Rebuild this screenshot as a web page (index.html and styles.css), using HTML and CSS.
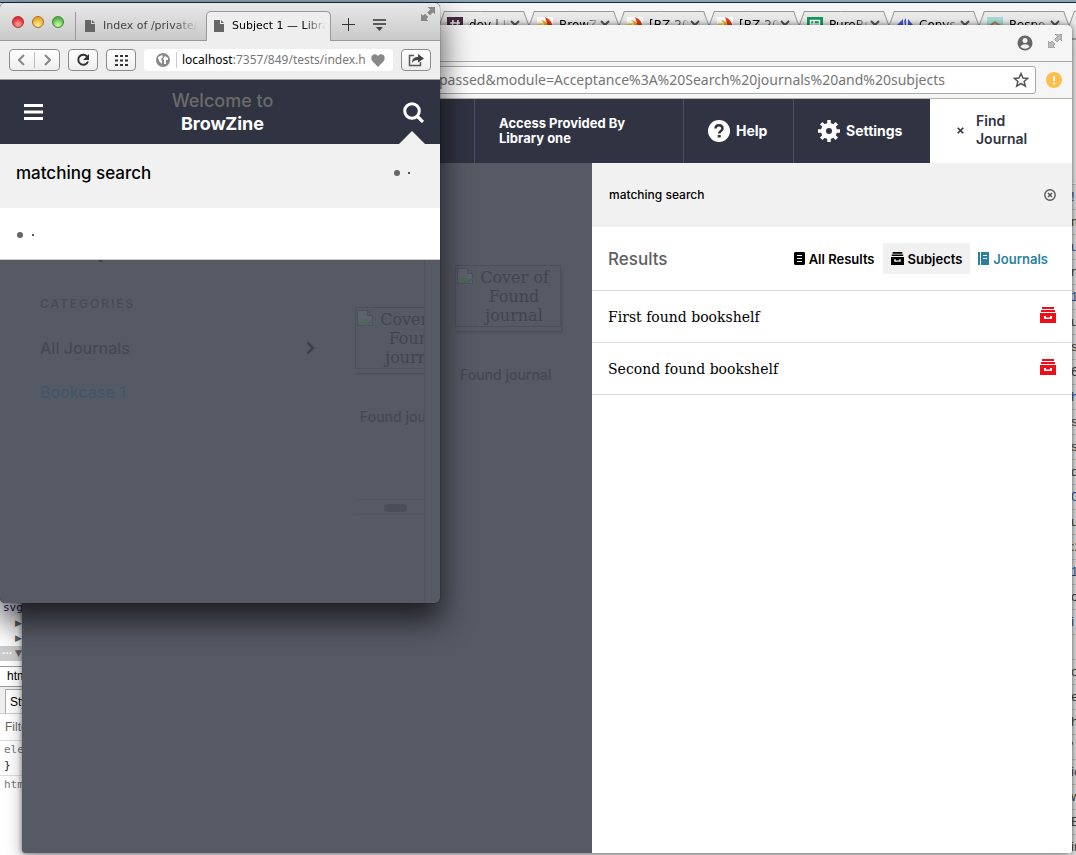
FILE: index.html
```html
<!DOCTYPE html>
<html lang="en">
<head>
<meta charset="utf-8">
<title>BrowZine</title>
<link rel="stylesheet" href="styles.css">
</head>
<body>
<svg class="defs" aria-hidden="true">
  <symbol id="shelf" viewBox="0 0 16 16"><path d="M2 0h12v2H2zM1 3h14v2H1zM0 6h16v10H0zM4 9v3h8V9h-2v1.500H6V9z" fill="currentColor" fill-rule="evenodd"/></symbol>
  <symbol id="expand" viewBox="0 0 14 14"><path d="M7 0h7v7l-2-2-3 3-2.500-2.500 3-3zM7 14H0V7l2 2 2-2 3 3-2 2z" fill="currentColor" stroke="#888" stroke-width=".6"/></symbol>
  <symbol id="page" viewBox="0 0 10 12"><path d="M0 0h6v4h4v8H0zM7 0l3 3H7z" fill="currentColor"/></symbol>
  <symbol id="broken" viewBox="0 0 16 16"><path d="M.5.500h10l5 5v10H.5zM10.500.500v5h5" fill="#5d626d" stroke="#4c505b"/><path d="M1 15l5-6 4 1 2 2-3 3z" fill="#4f6658"/><path d="M9 16l7-6" stroke="#565a65" stroke-width="2"/></symbol>
  <symbol id="flame" viewBox="0 0 16 16"><path d="M0 0h16v16H0z" fill="#fff"/><path d="M8 0c9 4 9 12 3 16H5c5-5 6-9 3-16z" fill="#e33b13"/><path d="M4 3c4 3 4 8-1 13h5c5-6 3-12-4-13z" fill="#ffb21c"/><path d="M0 7l6-1-4 8z" fill="#ffe21c"/></symbol>
  <symbol id="close" viewBox="0 0 10 10"><path d="M1 1l8 8M9 1L1 9" stroke="#555" stroke-width="2"/></symbol>
</svg>
<div class="desktop">
  <section class="window back" aria-label="Browser with developer tools">
    <nav class="backtabs">
      <button class="btab"><svg class="fav" viewBox="0 0 16 16"><path d="M0 0h16v16H0z" fill="#4a2c42"/><path d="M6 3L5 13M11 3l-1 10M3 6h10M3 10h10" stroke="#fff" stroke-width="1.500"/></svg><span>dev | JIRA</span><svg class="x"><use href="#close"/></svg></button>
      <button class="btab"><svg class="fav"><use href="#flame"/></svg><span>BrowZine</span><svg class="x"><use href="#close"/></svg></button>
      <button class="btab"><svg class="fav"><use href="#flame"/></svg><span>[BZ-200]</span><svg class="x"><use href="#close"/></svg></button>
      <button class="btab"><svg class="fav"><use href="#flame"/></svg><span>[BZ-200]</span><svg class="x"><use href="#close"/></svg></button>
      <button class="btab"><svg class="fav" viewBox="0 0 16 16"><path d="M0 0h16v16H0z" fill="#0c9d58"/><path d="M3.500 3.500h9v9h-9zM3 7h10M7 3v10" fill="none" stroke="#fff" stroke-width="1.500"/></svg><span>PureBr</span><svg class="x"><use href="#close"/></svg></button>
      <button class="btab"><svg class="fav" viewBox="0 0 16 16"><path d="M0 8l6-6v12zM7 4l2-3v11zM11 2l5 6-5 5z" fill="#4457d6"/></svg><span>Convs</span><svg class="x"><use href="#close"/></svg></button>
      <button class="btab"><svg class="fav" viewBox="0 0 16 16"><path d="M0 0h16v16H0z" fill="#a5dcd8"/><path d="M3 9l5-4 5 4" fill="none" stroke="#b5835a" stroke-width="2"/></svg><span>Respo</span><svg class="x"><use href="#close"/></svg></button>
      <button class="btab"></button>
    </nav>
    <div class="backbody">
      <div class="devtools">
        <div class="tree">
          <code class="tag">svg</code>
          <span class="arrow">▶</span>
          <span class="arrow">▶</span>
          <span class="arrow selected"><i>···</i>▼</span>
        </div>
        <div class="crumb">html</div>
        <div class="styletabs"><button>Styles</button></div>
        <div class="filter">Filter</div>
        <code class="rule">element<br><b>}</b></code>
        <code class="rule last">html</code>
      </div>
      <div class="console">
        <p class="blue">!</p><p>m</p><p class="blue">u</p><p>na</p><p class="blue">1</p><p>u</p><p>s</p><p>6</p><p class="blue">h</p><p>st</p><p>st</p><p>d</p><p class="blue">0</p><p>u</p><p>:2</p><p class="blue">1'</p><p>c</p><p class="blue">i</p><p></p><p>on</p><p>en</p><p>h</p><p>'</p><p>ic</p><p>w</p><p>E</p><p>in</p>
      </div>
    </div>
  </section>

  <section class="window wide" aria-label="Journal search">
    <div class="titlebar">
      <svg width="16" height="16" viewBox="0 0 16 16"><circle cx="8" cy="8" r="7.500" fill="#666"/><circle cx="8" cy="5.500" r="2.500" fill="#f5f5f5"/><path d="M3.500 11.500c2-3 7-3 9 0-2 3-7 3-9 0z" fill="#f5f5f5"/></svg>
      <svg class="grow" width="14" height="14"><use href="#expand"/></svg>
    </div>
    <div class="urlbar">
      <div class="urlfield">
        <input type="text" aria-label="Address" value="passed&amp;module=Acceptance%3A%20Search%20journals%20and%20subjects">
        <svg width="16" height="16" viewBox="0 0 16 16"><path d="M8 1.500l2 4.500 4.700.4-3.600 3 1.200 4.700L8 11.500l-4.300 2.600 1.200-4.700-3.600-3L6 6z" fill="none" stroke="#555" stroke-width="1.500"/></svg>
      </div>
      <svg width="16" height="16" viewBox="0 0 16 16"><circle cx="8" cy="8" r="8" fill="#fdbe4d"/><path d="M8 4v5M8 10.500v2" stroke="#fff" stroke-width="2"/></svg>
    </div>
    <header class="appbar">
      <div class="access">Access Provided By<br>Library one</div>
      <button class="tool help"><svg width="22" height="22" viewBox="0 0 22 22"><circle cx="11" cy="11" r="11" fill="#fff"/><path d="M7.500 8.500c0-4.500 7-4.500 7 0 0 2.500-3.300 2.500-3.300 5" fill="none" stroke="#303341" stroke-width="2.500"/><path d="M9.700 15h3v2.500h-3z" fill="#303341"/></svg>Help</button>
      <button class="tool settings"><svg width="22" height="22" viewBox="0 0 22 22"><path d="M11 0v22M0 11h22M3.200 3.200l15.600 15.600M18.800 3.200L3.200 18.800" stroke="#fff" stroke-width="3.500"/><circle cx="11" cy="11" r="5.500" fill="#303341" stroke="#fff" stroke-width="5"/></svg>Settings</button>
      <button class="find"><svg width="7" height="7" viewBox="0 0 7 7"><path d="M.7.700l5.600 5.600M6.300.700L.7 6.300" stroke="#303341" stroke-width="1.600"/></svg><span>Find<br>Journal</span></button>
    </header>
    <div class="workspace">
      <div class="shade">
        <figure class="journal">
          <div class="cover"><svg width="16" height="16"><use href="#broken"/></svg>Cover of Found journal</div>
          <figcaption>Found journal</figcaption>
        </figure>
      </div>
      <main class="panel">
        <div class="query">
          <input type="text" aria-label="Search journals and subjects" value="matching search">
          <button aria-label="Clear search"><svg width="12" height="12" viewBox="0 0 12 12"><circle cx="6" cy="6" r="5.200" fill="none" stroke="#555" stroke-width="1.400"/><path d="M4 4l4 4M8 4L4 8" stroke="#555" stroke-width="1.500"/></svg></button>
        </div>
        <div class="results">
          <h2>Results</h2>
          <button><svg width="11" height="13" viewBox="0 0 11 13"><path d="M1 0h9l1 1v11l-1 1H1l-1-1V1z"/><path d="M3 3.500h5M3 6.500h5M3 9.500h5" stroke="#fff" stroke-width="1.200"/></svg>All Results</button>
          <button class="active"><svg width="13" height="13"><use href="#shelf"/></svg>Subjects</button>
          <button class="link"><svg width="11" height="13" viewBox="0 0 11 13"><path d="M0 0h2v13H0zM3 0h8v13H3z" fill="#2c7f9e"/><path d="M5 3.500h4M5 6.500h4" stroke="#fff" stroke-width="1.200"/></svg>Journals</button>
        </div>
        <ul class="shelves">
          <li>First found bookshelf<svg width="16" height="16"><use href="#shelf"/></svg></li>
          <li>Second found bookshelf<svg width="16" height="16"><use href="#shelf"/></svg></li>
        </ul>
      </main>
    </div>
  </section>

  <section class="window narrow" aria-label="Mobile search">
    <div class="tabbar">
      <span class="light red"></span><span class="light amber"></span><span class="light green"></span>
      <button class="tab"><svg width="10" height="12"><use href="#page"/></svg><span>Index of /private/</span></button>
      <button class="tab current"><svg width="10" height="12"><use href="#page"/></svg><span>Subject 1 — Library</span></button>
      <svg class="plus" width="13" height="13" viewBox="0 0 13 13"><path d="M6.500 0v13M0 6.500h13" stroke="#333"/></svg>
      <svg class="menu" width="13" height="12" viewBox="0 0 13 12"><path d="M0 1h13M0 5h13" stroke="#333" stroke-width="1.300"/><path d="M3 8h7l-3.500 4z" fill="#444"/></svg>
      <svg class="expand" width="14" height="14"><use href="#expand"/></svg>
    </div>
    <div class="toolbar">
      <button class="chip pair" aria-label="Back and forward"><svg width="33" height="16" viewBox="0 0 33 16"><path d="M6 3L1 8l5 5M27 3l5 5-5 5" fill="none" stroke="#888" stroke-width="2"/><path d="M16.500 0v16" stroke="#bbb"/></svg></button>
      <button class="chip" aria-label="Reload"><svg width="14" height="14" viewBox="0 0 14 14"><path d="M11 3.500A5 5 0 1 0 12 8.500" fill="none" stroke="#333" stroke-width="2"/><path d="M13 1v6H7z" fill="#333"/></svg></button>
      <button class="chip" aria-label="Speed dial"><svg width="13" height="11" viewBox="0 0 13 11"><path d="M0 1h13M0 5.500h13M0 10h13" stroke="#333" stroke-width="2" stroke-dasharray="3 2"/></svg></button>
      <div class="address">
        <svg width="14" height="14" viewBox="0 0 14 14"><circle cx="7" cy="7" r="7" fill="#888"/><path d="M2 4l4-2 1 2-2 2 1 2v3L3 8zM9 3l3 2v2h-2v4H8V7L7 6z" fill="#fff"/></svg>
        <span class="host"><b>localhost</b>:7357/849/tests/index.html</span>
        <svg width="14" height="13" viewBox="0 0 14 13"><path d="M7 13L1.200 7C-2 2 4-2 7 2c3-4 9 0 5.800 5z" fill="#888"/></svg>
      </div>
      <button class="chip" aria-label="Share"><svg width="16" height="14" viewBox="0 0 16 14"><path d="M6 2.500H1.500v10h11V9" fill="none" stroke="#555" stroke-width="1.500"/><path d="M4 10c0-5 3-6 6-6V1l6 4.500-6 4V7C7 7 5 8 4 10z" fill="#444"/></svg></button>
    </div>
    <header class="mobilebar">
      <button aria-label="Menu"><svg width="19" height="16" viewBox="0 0 19 16"><path d="M0 1.500h19M0 8h19M0 14.500h19" stroke="#fff" stroke-width="3"/></svg></button>
      <h1><span>Welcome to</span>BrowZine</h1>
      <button class="magnify" aria-label="Search"><svg width="22" height="22" viewBox="0 0 22 22"><circle cx="10" cy="10" r="7.300" fill="none" stroke="#fff" stroke-width="3"/><path d="M15 15l6 6" stroke="#fff" stroke-width="3.200"/></svg></button>
    </header>
    <div class="mobilequery">
      <input type="text" aria-label="Search" value="matching search">
      <svg width="18" height="6" viewBox="0 0 18 6"><circle cx="3" cy="3" r="3" fill="#666"/><path d="M14 2h2v2h-2z" fill="#555"/></svg>
    </div>
    <div class="loading"><svg width="18" height="6" viewBox="0 0 18 6"><circle cx="3" cy="3" r="3" fill="#666"/><path d="M15 2h2v2h-2z" fill="#555"/></svg></div>
    <div class="dimmed">
      <aside>
        <h2>Library</h2>
        <h3>CATEGORIES</h3>
        <p>All Journals<svg width="9" height="14" viewBox="0 0 9 14"><path d="M1.500 1.500L7 7l-5.500 5.500" fill="none" stroke="#3d414c" stroke-width="2.500"/></svg></p>
        <a href="#bookcase">Bookcase 1</a>
      </aside>
      <div class="peek">
        <figure class="journal">
          <div class="cover"><svg width="16" height="16"><use href="#broken"/></svg>Cover of Found journal</div>
          <figcaption>Found journal</figcaption>
        </figure>
        <div class="nextcard"></div>
      </div>
    </div>
  </section>
</div>
</body>
</html>
```
FILE: styles.css
```css
* { box-sizing: border-box; }
body, h1, h2, h3, p, ul, figure { margin: 0; padding: 0; }
body { font: 500 13px/18px Inter, sans-serif; color: #000; overflow: hidden; }
button, input { font: inherit; color: inherit; background: none; border: 0; padding: 0; margin: 0; }
input { min-width: 0; outline: 0; }
svg { flex: none; display: block; }
.defs { position: absolute; width: 0; height: 0; }

.desktop { position: relative; height: 100vh; background: linear-gradient(#8ba2af 2px, #0e2c43 2px); overflow: hidden; }
.window { position: absolute; display: flex; flex-direction: column; overflow: hidden; isolation: isolate; }

/* Browser behind, with developer tools docked */
.back { inset: 3px 0 0 0; background: #f5f5f5; }
.backtabs { display: flex; flex: none; height: 36px; padding: 8px 0 0 440px; overflow: hidden; border-bottom: 1px solid #aaa; }
.btab { position: relative; flex: none; display: flex; align-items: center; width: 90px; padding: 0 10px 0 7px; font: 12px/16px "DejaVu Sans", sans-serif; text-align: left; }
.btab::before, .btab::after { content: ""; position: absolute; top: 0; bottom: 0; border-top: 1px solid #999; background: #ebebeb; z-index: 0; }
.btab::before { left: 4px; right: 40px; border-left: 1px solid #999; transform: skewX(-20deg); transform-origin: top; }
.btab::after { left: 40px; right: 6px; border-right: 1px solid #999; transform: skewX(20deg); transform-origin: top; }
.btab > * { position: relative; z-index: 1; }
.btab span { flex: 1; margin-left: 6px; overflow: hidden; white-space: nowrap; mask-image: linear-gradient(90deg, #000 60%, transparent); }
.fav { width: 16px; height: 16px; }
.x { width: 10px; height: 10px; }
.backbody { flex: 1; display: flex; justify-content: space-between; min-height: 0; background: linear-gradient(#aaa 1px, #f2f2f2 1px, #f2f2f2 144px, #fff 144px); }
.devtools { align-self: flex-end; width: 60px; height: 255px; background: #fff; }
.devtools code { font: 11px/16px "DejaVu Sans Mono", monospace; }
.tree { height: 67px; display: flex; flex-direction: column; border-bottom: 1px solid #999; }
.tree .tag { color: #1a1080; padding-left: 3px; }
.arrow { font: 9px/15px "DejaVu Sans", sans-serif; color: #666; padding-left: 15px; }
.selected { display: flex; padding-left: 2px; background: #ccc; }
.selected i { width: 13px; color: #fff; font-weight: bold; font-style: normal; }
.crumb { padding: 0 7px; font: 12px/19px "Liberation Sans", sans-serif; border-bottom: 1px solid #999; }
.styletabs { display: flex; padding: 2px 0 0 5px; height: 27px; background: #eee; border-bottom: 1px solid #ccc; }
.styletabs button { padding: 0 4px; background: #fff; border: 1px solid #aaa; border-bottom: 0; font: 12px/20px "Liberation Sans", sans-serif; }
.filter { padding: 0 5px; font: 12px/26px "Liberation Sans", sans-serif; color: #666; border-bottom: 1px solid #ddd; }
.devtools .rule { display: block; padding: 1px 4px; border-bottom: 1px solid #ddd; color: #777; }
.rule b { color: #222; font-weight: normal; }
.devtools .last { border: 0; }
.console { width: 5px; padding-top: 145px; overflow: hidden; }
.console p { height: 25px; border-top: 1px solid #ccc; font: 13px/24px "Liberation Sans", sans-serif; color: #444; background: #ececec; }
.console .blue { color: #2a55a5; }

/* Wide window with the search panel open */
.wide { inset: 25px 4px 2px 22px; background: #f5f5f5; border-radius: 5px 5px 3px 3px; box-shadow: 0 0 5px rgba(0,0,0,.5), 0 6px 18px rgba(0,0,0,.3); }
.titlebar { flex: none; display: flex; justify-content: flex-end; align-items: center; gap: 15px; height: 37px; padding-right: 10px; border-bottom: 1px solid #aaa; }
.grow { color: #bbb; margin-bottom: 4px; }
.urlbar { flex: none; display: flex; align-items: center; gap: 10px; height: 37px; padding-right: 10px; border-bottom: 1px solid #b5b5ac; }
.urlfield { flex: 1; display: flex; align-items: center; height: 28px; padding: 0 6px 0 416px; background: #fff; border: 1px solid #aaa; border-radius: 3px; }
.urlfield input { flex: 1; font: 14px/24px "Noto Sans", sans-serif; color: #757575; }
.appbar { flex: none; display: flex; justify-content: flex-end; height: 64px; background: #303341; color: #fff; font: 700 14px/18px Inter, sans-serif; }
.access { width: 209px; padding: 17px 24px; font-size: 13px; line-height: 15px; border-left: 1px solid #4d5064; }
.tool { display: flex; align-items: center; gap: 6px; padding: 0 24px; border-left: 1px solid #4d5064; }
.help { width: 110px; }
.settings { width: 137px; }
.find { display: flex; align-items: center; gap: 12px; width: 142px; padding: 0 0 2px 27px; background: #fff; color: #303341; font-size: 14px; font-weight: 600; text-align: left; }
.workspace { flex: 1; display: flex; min-height: 0; }
.shade { flex: 1; padding: 102px 0 0 433px; background: #565a65; }
.panel { width: 480px; background: #fff; }
.query { display: flex; align-items: center; height: 64px; padding: 0 16px 0 17px; background: #f1f1f1; font-size: 12px; }
.query input { flex: 1; }
.results { display: flex; align-items: center; height: 64px; padding: 0 16px; border-bottom: 1px solid #ddd; font-size: 13px; font-weight: 600; }
.results h2 { flex: 1; font-size: 17px; font-weight: 500; color: #606060; }
.results button { display: flex; align-items: center; gap: 4px; height: 31px; padding: 0 8px; }
.results .active { background: #f1f1f1; }
.results .link { color: #2c7f9e; }
.shelves { list-style: none; font: 14px/18px "DejaVu Serif", serif; }
.shelves li { display: flex; justify-content: space-between; align-items: center; height: 52px; padding: 0 16px; border-bottom: 1px solid #ddd; }
.shelves svg { color: #ed1018; margin-bottom: 4px; }

.journal { width: 106px; color: #41454f; text-align: center; }
.cover { height: 62px; padding: 2px 4px 0 16px; border: 1px solid #4c505b; box-shadow: 0 4px 0 #565a65, 1px 5px 2px #474b56; font: 16px/19px "DejaVu Serif", serif; }
.cover svg { float: left; margin-left: -15px; }
.journal figcaption { padding-top: 39px; font-size: 14px; color: #444854; white-space: nowrap; text-align: left; text-indent: 5px; }

/* Narrow window in front */
.narrow { left: 0; top: 3px; width: 440px; height: 600px; background: #565a65; border-radius: 5px; box-shadow: 0 0 1px #000, 0 16px 30px 2px rgba(0,0,0,.65); }
.tabbar { flex: none; display: flex; align-items: center; height: 38px; padding: 0 5px 0 12px; background: linear-gradient(#e8e8e8, #c9c9c9); border-bottom: 1px solid #999; }
.light { width: 12px; height: 12px; margin-right: 8px; border-radius: 50%; border: 1px solid #777; }
.red { background: radial-gradient(circle at 50% 75%, #ffaaaa, #e8262e 70%); border-color: #a33; }
.amber { background: radial-gradient(circle at 50% 80%, #fff19a, #eda52a 70%); border-color: #a76f25; }
.green { background: radial-gradient(circle at 50% 80%, #d6ffad, #51b848 70%); border-color: #438241; }
.tab { display: flex; align-items: center; gap: 8px; width: 131px; height: 28px; margin: 8px 0 0 3px; padding: 0 8px 0 9px; border-left: 1px solid #999; color: #444; font: 11px/16px "DejaVu Sans", sans-serif; }
.tab svg { color: #666; }
.tab span { flex: 1; overflow: hidden; white-space: nowrap; text-align: left; mask-image: linear-gradient(90deg, #000 75%, transparent); }
.current { width: 125px; height: 30px; margin: 8px 0 0; padding: 0 4px 0 7px; background: #eee; border: 1px solid #999; border-bottom: 0; border-radius: 5px 5px 0 0; color: #000; }
.plus { margin: 6px 18px 0 11px; }
.menu { margin-top: 6px; }
.expand { margin: 0 0 16px auto; color: #888; }
.toolbar { flex: none; display: flex; align-items: center; gap: 8px; height: 39px; padding: 0 9px; background: #eee; border-bottom: 1px solid #999; }
.chip { display: flex; align-items: center; justify-content: center; width: 30px; height: 22px; border: 1px solid #8b8b8b; border-radius: 4px; background: linear-gradient(#fff, #eee); }
.pair { width: 51px; }
.address { flex: 1; display: flex; align-items: center; min-width: 0; height: 22px; padding: 0 8px 0 12px; background: #fff; border-radius: 4px; }
.host { flex: 1; margin: 0 6px; padding-left: 5px; overflow: hidden; white-space: nowrap; border-left: 1px solid #ccc; font: 12px/16px "Noto Sans", sans-serif; color: #777; }
.host b { font-weight: normal; color: #000; }
.mobilebar { flex: none; display: flex; align-items: center; justify-content: space-between; position: relative; height: 64px; padding: 0 16px 0 24px; background: #303341; color: #fff; }
.mobilebar h1 { font: 700 18px/23px Inter, sans-serif; text-align: center; }
.mobilebar h1 span { display: block; color: #6b6b6b; font-weight: 500; }
.magnify::after { content: ""; position: absolute; right: 15px; bottom: 0; border: 13px solid transparent; border-top: 0; border-bottom-color: #f1f1f1; }
.mobilequery { flex: none; display: flex; align-items: center; height: 64px; padding: 0 28px 6px 16px; background: #f1f1f1; font: 500 17px/24px Inter, sans-serif; }
.mobilequery input { flex: 1; }
.loading { flex: none; display: flex; align-items: center; height: 52px; padding: 2px 0 0 17px; background: #fff; border-bottom: 1px solid #ccc; }
.dimmed { flex: 1; display: flex; min-height: 0; padding-right: 15px; }
aside { flex: 1; padding-left: 40px; font: 500 16px/44px Inter, sans-serif; color: #444854; }
aside h2 { height: 22px; overflow: hidden; font: 700 24px/24px Inter, sans-serif; color: #3d414c; text-indent: -15px; margin-top: -20px; margin-bottom: 20px; clip-path: inset(20px 0 0 0); }
aside h3 { font: 500 12px/44px Inter, sans-serif; letter-spacing: 2px; color: #474b56; }
aside p { display: flex; justify-content: space-between; align-items: center; }
aside a { display: block; color: #405766; text-decoration: none; }
.peek { width: 70px; margin-left: 40px; padding-top: 47px; border-right: 1px solid #50545f; overflow: hidden; }
.nextcard { display: flex; justify-content: center; height: 16px; margin-top: 73px; padding: 4px 0 0 11px; border: 1px solid #525661; border-width: 1px 0; }
.nextcard::before { content: ""; width: 23px; height: 8px; border-radius: 4px; background: #4a4e59; }
```
